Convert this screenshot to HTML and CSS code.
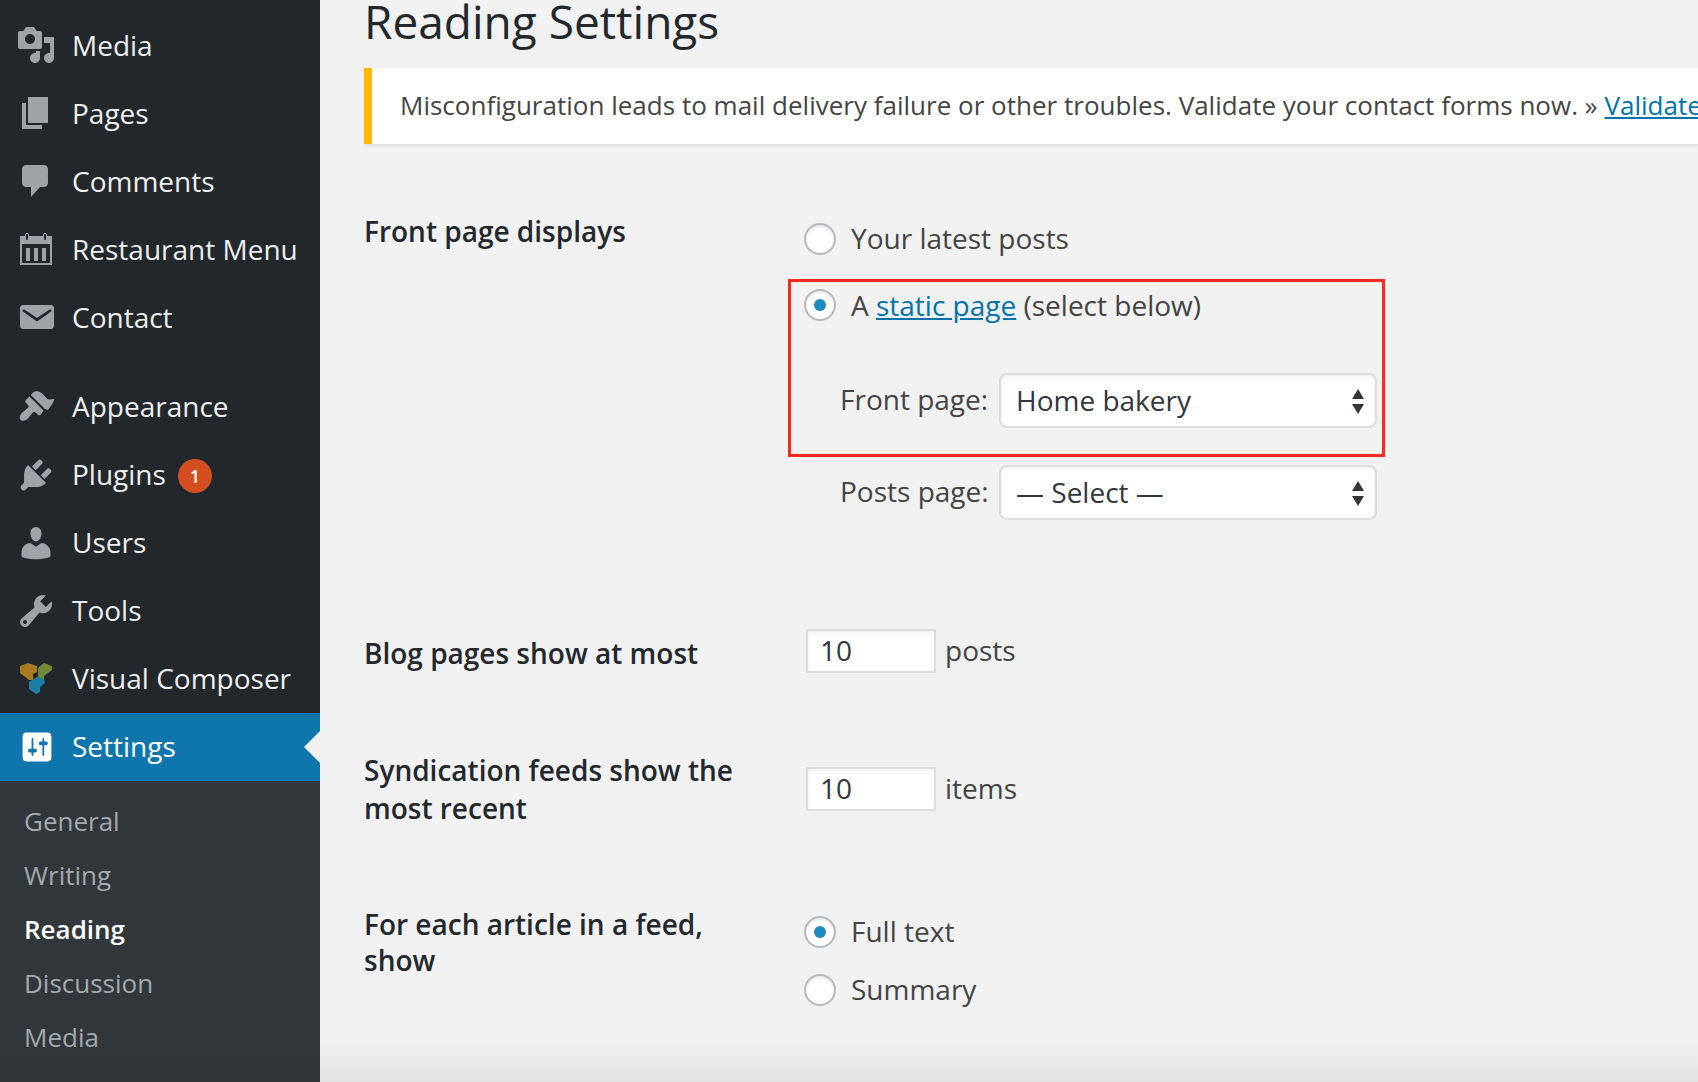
FILE: index.html
```html
<!DOCTYPE html>
<html lang="en">
<head>
    <meta charset="UTF-8">
    <title>Reading Settings</title>
    <link rel="stylesheet" href="styles.css">
</head>
<body>
    <nav class="sidebar">
        <ul class="menu">
            <li class="menu-item">
                <svg class="menu-icon" viewBox="0 0 20 20"><path d="M13 11V4c0-.55-.45-1-1-1h-1.670L9 1H5L3.670 3H2c-.55 0-1 .45-1 1v7c0 .55.45 1 1 1h10c.55 0 1-.45 1-1zM7 4.500c1.380 0 2.500 1.120 2.500 2.500S8.380 9.500 7 9.500 4.500 8.380 4.500 7 5.620 4.500 7 4.500zM14 6h5v10.500c0 1.380-1.120 2.500-2.500 2.500S14 17.880 14 16.500s1.120-2.500 2.500-2.500c.17 0 .34.02.5.05V9h-3V6zm-4 8.050V13h2v3.500c0 1.380-1.120 2.500-2.500 2.500S7 17.880 7 16.500 8.120 14 9.500 14c.17 0 .34.02.5.05z"/></svg>
                Media
            </li>
            <li class="menu-item">
                <svg class="menu-icon" viewBox="0 0 20 20"><path d="M6 15V2h10v13H6zm-1 1h8v2H3V5h2v11z"/></svg>
                Pages
            </li>
            <li class="menu-item">
                <svg class="menu-icon" viewBox="0 0 20 20"><path d="M5 2h9c1.100 0 2 .9 2 2v7c0 1.100-.9 2-2 2h-2l-4.500 5v-5H5c-1.100 0-2-.9-2-2V4c0-1.100.9-2 2-2z"/></svg>
                Comments
            </li>
            <li class="menu-item">
                <svg class="menu-icon" viewBox="0 0 20 20"><path fill-rule="evenodd" d="M2 3.500h2.500V3c0-1.300 2-1.300 2 0v.5h7V3c0-1.300 2-1.300 2 0v.5H18V18H2V3.500zM5 3v2c0 .6 1 .6 1 0V3c0-.6-1-.6-1 0zm9 0v2c0 .6 1 .6 1 0V3c0-.6-1-.6-1 0zM3 7.500V17h14V7.500H3z"/><path d="M5 9.500h2V16H5zM9 9.500h2V16H9zM13 9.500h2V16h-2z"/></svg>
                Restaurant Menu
            </li>
            <li class="menu-item">
                <svg class="menu-icon" viewBox="0 0 20 20"><path fill-rule="evenodd" d="M19 14.500v-9c0-.83-.67-1.500-1.500-1.500H3.490c-.83 0-1.500.67-1.500 1.500v9c0 .83.67 1.500 1.500 1.500H17.500c.83 0 1.500-.67 1.500-1.500zM4.200 6.300c-.6-.4-1.300.4-.8 1l7.100 5 7.100-5c.5-.6-.2-1.400-.8-1l-6.300 4.200z"/></svg>
                Contact
            </li>
        </ul>

        <ul class="menu menu-lower">
            <li class="menu-item">
                <svg class="menu-icon" viewBox="0 0 20 20"><path d="M14.480 11.060L7.410 3.990l1.500-1.500c.5-.56 2.300-.47 3.510.32 1.210.8 1.430 1.280 2.660 2.510 1.230 1.220 2.170 1.030 3.410.68.43-.12.87.11.5.73-.7 1.200-1.800 3.500-3 4.830zm-.71.71L6.700 4.700 4.930 6.470c-.39.39-.39 1.020 0 1.410l1.060 1.060c.39.39.39 1.030 0 1.420-.6.6-1.430 1.270-2.210 1.870-.84.63-1.460 1.360-1.760 2.210-.3.85-.2 1.500.35 2 .5.5 1.200.6 2 .3.85-.3 1.600-.9 2.230-1.730.6-.79 1.270-1.620 1.870-2.210.39-.39 1.030-.39 1.420 0l1.060 1.060c.39.39 1.020.39 1.410 0z"/></svg>
                Appearance
            </li>
            <li class="menu-item">
                <svg class="menu-icon" viewBox="0 0 20 20"><path d="M13.110 4.360L9.870 7.600 8 5.730l3.240-3.240c.35-.34 1.050-.2 1.560.32.52.51.66 1.210.31 1.550zm-8 1.770l.91-1.120 9.010 9.010-1.190.84c-.71.71-2.630 1.160-3.820 1.160H6.140L4.900 17.260c-.59.59-1.540.59-2.120 0-.59-.58-.59-1.530 0-2.120l1.240-1.240v-3.880c0-1.130.46-3.050 1.090-3.890zm7.260 3.970l3.240-3.240c.34-.35 1.040-.21 1.550.31.52.51.66 1.210.31 1.550l-3.240 3.250z"/></svg>
                Plugins
                <span class="badge">1</span>
            </li>
            <li class="menu-item">
                <svg class="menu-icon" viewBox="0 0 20 20"><path d="M10 9.250c-2.270 0-2.730-3.440-2.730-3.440C7 4.020 7.820 2 9.970 2c2.160 0 2.980 2.020 2.710 3.810 0 0-.41 3.440-2.680 3.440zm0 2.570L12.720 10c2.390 0 4.520 2.330 4.520 4.530v2.490s-3.650 1.130-7.240 1.130c-3.650 0-7.240-1.130-7.240-1.130v-2.490c0-2.250 1.940-4.480 4.470-4.480z"/></svg>
                Users
            </li>
            <li class="menu-item">
                <svg class="menu-icon" viewBox="0 0 20 20"><path d="M16.680 9.770c-1.340 1.340-3.300 1.670-4.950.99l-5.410 6.520c-.99.99-2.590.99-3.570 0-.99-.98-.99-2.580 0-3.570l6.520-5.420c-.68-1.650-.35-3.610.99-4.950 1.280-1.280 3.120-1.620 4.720-1.060l-2.890 2.890 2.820 2.820 2.890-2.870c.53 1.580.18 3.410-1.120 4.650zM3.810 16.210c.4.39 1.030.39 1.420 0 .4-.4.4-1.030 0-1.430-.39-.39-1.020-.39-1.420 0-.39.4-.39 1.030 0 1.430z"/></svg>
                Tools
            </li>
            <li class="menu-item">
                <svg class="menu-icon" viewBox="0 0 40 40">
                    <path fill="#a67c1f" d="M12 4l9 3v6l-4 2v6h-4L4 14V7z"/>
                    <path fill="#6f8c39" d="M28 4l8 3v4l-8 6v3l-4 6-2-6V9z"/>
                    <path fill="#1b7fa6" d="M13 23l8-5 7 2 1 4-5 4v5l-4 2-7-5z"/>
                </svg>
                Visual Composer
            </li>
            <li class="menu-item menu-item-current">
                <svg class="menu-icon" viewBox="0 0 20 20"><path d="M18 16V4c0-1.100-.9-2-2-2H4c-1.100 0-2 .9-2 2v12c0 1.100.9 2 2 2h12c1.100 0 2-.9 2-2zM8 11h1c.55 0 1 .45 1 1s-.45 1-1 1H8v1.500c0 .28-.22.5-.5.5s-.5-.22-.5-.5V13H6c-.55 0-1-.45-1-1s.45-1 1-1h1V5.500c0-.28.22-.5.5-.5s.5.22.5.5V11zm5-2h-1c-.55 0-1-.45-1-1s.45-1 1-1h1V5.500c0-.28.22-.5.5-.5s.5.22.5.5V7h1c.55 0 1 .45 1 1s-.45 1-1 1h-1v5.500c0 .28-.22.5-.5.5s-.5-.22-.5-.5V9z"/></svg>
                Settings
            </li>
        </ul>

        <ul class="submenu">
            <li>General</li>
            <li>Writing</li>
            <li class="current">Reading</li>
            <li>Discussion</li>
            <li>Media</li>
            <li>Permalinks</li>
        </ul>
    </nav>

    <main class="content">
        <h1>Reading Settings</h1>

        <div class="notice">
            Misconfiguration leads to mail delivery failure or other troubles. Validate your contact forms now. » <a href="#">Validate</a>
        </div>

        <form class="settings-form">
            <div class="form-row row-front">
                <div class="row-label">Front page displays</div>
                <div class="row-field">
                    <label class="radio-line">
                        <input type="radio" name="show_on_front">
                        Your latest posts
                    </label>
                    <div class="highlight">
                        <label class="radio-line">
                            <input type="radio" name="show_on_front" checked>
                            <span>A <a href="#">static page</a> (select below)</span>
                        </label>
                        <div class="page-select page-select-front">
                            <label for="frontPage">Front page:</label>
                            <span class="select-wrap">
                                <select id="frontPage">
                                    <option>Home bakery</option>
                                </select>
                            </span>
                        </div>
                    </div>
                    <div class="page-select page-select-posts">
                        <label for="postsPage">Posts page:</label>
                        <span class="select-wrap">
                            <select id="postsPage">
                                <option>— Select —</option>
                            </select>
                        </span>
                    </div>
                </div>
            </div>

            <div class="form-row row-posts">
                <div class="row-label">Blog pages show at most</div>
                <div class="row-field number-field">
                    <input type="text" class="small-text" value="10">
                    posts
                </div>
            </div>

            <div class="form-row row-feeds">
                <div class="row-label">Syndication feeds show the most recent</div>
                <div class="row-field number-field">
                    <input type="text" class="small-text" value="10">
                    items
                </div>
            </div>

            <div class="form-row row-article">
                <div class="row-label">For each article in a feed, show</div>
                <div class="row-field">
                    <label class="radio-line">
                        <input type="radio" name="rss_use_excerpt" checked>
                        Full text
                    </label>
                    <label class="radio-line radio-line-next">
                        <input type="radio" name="rss_use_excerpt">
                        Summary
                    </label>
                </div>
            </div>
        </form>
    </main>

    <div class="bottom-fade"></div>
</body>
</html>
```

FILE: styles.css
```css
* {
    box-sizing: border-box;
    margin: 0;
    padding: 0;
    font-family: 'Open Sans', 'Noto Sans', sans-serif;
}

body {
    display: flex;
    height: 100vh;
    overflow: hidden;
    background-color: #f1f1f1;
    color: #444;
}

a {
    color: #0073aa;
}

ul {
    list-style: none;
}

/* Sidebar */
.sidebar {
    flex: 0 0 320px;
    height: 100%;
    padding-top: 11px;
    overflow: hidden;
    background-color: #23282d;
}

.menu-lower {
    margin-top: 22px;
}

.menu-item {
    position: relative;
    display: flex;
    align-items: center;
    height: 68px;
    padding-left: 16px;
    font-size: 28px;
    color: #eee;
}

.menu-icon {
    flex: 0 0 40px;
    width: 40px;
    height: 40px;
    margin-right: 16px;
    fill: #9ea3a8;
}

.menu-lower .menu-item {
    padding-bottom: 2px;
}

.menu-lower .menu-icon {
    margin-top: 2px;
}

.menu-item-current {
    background-color: #0f75ad;
    color: #fff;
}

.menu-item-current .menu-icon {
    fill: #fff;
    transform: translateX(1px) scale(0.9);
}

.menu-item-current::after {
    content: "";
    position: absolute;
    top: 18px;
    right: 0;
    border: 16px solid transparent;
    border-right-color: #f1f1f1;
    border-left-width: 0;
}

.badge {
    display: inline-flex;
    align-items: center;
    justify-content: center;
    width: 34px;
    height: 34px;
    margin: 4px 0 0 12px;
    border-radius: 50%;
    background-color: #d54e21;
    color: #fff;
    font-size: 18px;
    font-weight: 600;
}

.submenu {
    padding: 13px 0 0 24px;
    background-color: #32373c;
}

.submenu li {
    height: 54px;
    line-height: 54px;
    font-size: 26px;
    color: #a5a9ae;
}

.submenu .current {
    color: #fff;
    font-weight: 600;
}

/* Main column */
.content {
    flex: 1;
    min-width: 0;
    padding-left: 44px;
    font-size: 28px;
}

h1 {
    height: 68px;
    font-size: 46px;
    font-weight: 400;
    line-height: 42px;
    color: #23282d;
}

.notice {
    height: 76px;
    padding-left: 28px;
    border-left: 8px solid #ffb900;
    background-color: #fff;
    box-shadow: 0 2px 2px rgba(0, 0, 0, 0.08);
    font-size: 26px;
    letter-spacing: 0.01px;
    line-height: 74px;
    white-space: nowrap;
    overflow: hidden;
}

.form-row {
    display: grid;
    grid-template-columns: 440px 1fr;
}

.row-label {
    width: 390px;
    font-size: 28px;
    font-weight: 600;
    line-height: 38px;
    color: #23282d;
}

.row-front {
    margin-top: 79px;
}

.row-posts {
    margin-top: 109px;
}

.row-feeds {
    margin-top: 94px;
}

.row-article {
    margin-top: 89px;
}

.row-front .row-label {
    margin-top: -11px;
}

.row-posts .row-label {
    margin-top: 5px;
}

.row-feeds .row-label {
    margin-top: -16px;
}

.row-article .row-label {
    margin-top: -10px;
    line-height: 36px;
}

.radio-line {
    display: flex;
    align-items: center;
    height: 32px;
    font-size: 28px;
    color: #444;
}

.row-field > .radio-line {
    padding-bottom: 2px;
}

.row-field > .radio-line input {
    margin-top: 2px;
}

.radio-line-next {
    margin-top: 26px;
}

input[type="radio"] {
    appearance: none;
    display: inline-flex;
    align-items: center;
    justify-content: center;
    flex: 0 0 32px;
    width: 32px;
    height: 32px;
    margin-right: 15px;
    border: 2px solid #b4b9be;
    border-radius: 50%;
    background-color: #fff;
    box-shadow: inset 0 2px 3px rgba(0, 0, 0, 0.1);
}

input[type="radio"]:checked::before {
    content: "";
    width: 12px;
    height: 12px;
    border-radius: 50%;
    background-color: #1e8cbe;
}

.highlight {
    width: 597px;
    height: 178px;
    margin: 24px 0 0 -16px;
    padding: 7px 0 0 13px;
    border: 3px solid #ff2a1f;
}

.page-select {
    display: flex;
    align-items: center;
    font-size: 28px;
}

.page-select label {
    width: 195px;
    padding: 0 0 4px 36px;
    white-space: nowrap;
}

.page-select-front {
    margin-top: 52px;
    margin-left: -13px;
}

.page-select-front label {
    width: 208px;
    padding-left: 49px;
}

.page-select-posts {
    margin-top: 8px;
}

.select-wrap {
    position: relative;
    display: block;
    width: 378px;
    height: 55px;
}

.select-wrap::before,
.select-wrap::after {
    content: "";
    position: absolute;
    right: 13px;
    border-left: 6.5px solid transparent;
    border-right: 6.5px solid transparent;
    pointer-events: none;
}

.select-wrap::before {
    top: 16px;
    border-bottom: 10px solid #32373c;
}

.select-wrap::after {
    top: 31px;
    border-top: 10px solid #32373c;
}

select {
    appearance: none;
    width: 100%;
    height: 100%;
    padding: 0 0 2px 15px;
    border: 2px solid #ddd;
    border-radius: 8px;
    background-color: #fff;
    box-shadow: inset 0 2px 4px rgba(0, 0, 0, 0.07);
    font-size: 28px;
    color: #32373c;
}

.number-field {
    display: flex;
    align-items: flex-start;
    line-height: 42px;
    font-size: 28px;
    padding-left: 2px;
    color: #444;
}

.small-text {
    width: 130px;
    height: 44px;
    margin-right: 9px;
    padding: 0 0 2px 12px;
    border: 2px solid #ddd;
    background-color: #fff;
    box-shadow: inset 0 2px 4px rgba(0, 0, 0, 0.07);
    font-size: 28px;
    color: #32373c;
}

/* Soft shade along the bottom edge of the window */
.bottom-fade {
    position: absolute;
    left: 0;
    right: 0;
    bottom: 0;
    height: 44px;
    background: linear-gradient(rgba(0, 0, 0, 0), rgba(0, 0, 0, 0.06));
    pointer-events: none;
}
```
